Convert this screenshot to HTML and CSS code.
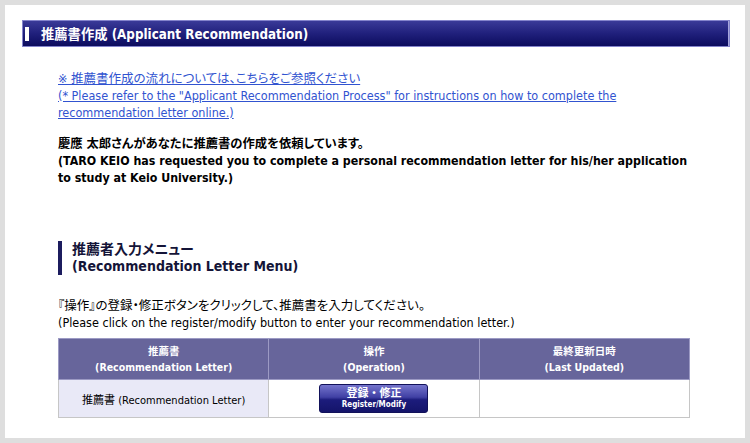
FILE: index.html
```html
<!DOCTYPE html>
<html>
  <head>
    <meta charset="utf-8" />
    <meta name="viewport" content="width=device-width, initial-scale=1.0" />
    <link rel="stylesheet" href="styles.css">
  </head>
  <body>
    <div class="page">
      <h1 class="page-title">
        <span class="title-mark"></span>
        <span>推薦書作成 (Applicant Recommendation)</span>
      </h1>

      <div class="content">
        <p class="links">
          <a href="#">※ 推薦書作成の流れについては、こちらをご参照ください</a><br>
          <a href="#">(* Please refer to the "Applicant Recommendation Process" for instructions on how to complete the<br>recommendation letter online.)</a>
        </p>

        <p class="request">
          慶應 太郎さんがあなたに推薦書の作成を依頼しています。<br>
          (TARO KEIO has requested you to complete a personal recommendation letter for his/her application<br>
          to study at Keio University.)
        </p>

        <h2 class="section-title">推薦者入力メニュー<br>(Recommendation Letter Menu)</h2>

        <p class="note">
          『操作』の登録・修正ボタンをクリックして、推薦書を入力してください。<br>
          (Please click on the register/modify button to enter your recommendation letter.)
        </p>

        <table class="menu">
          <thead>
            <tr>
              <th>推薦書<br>(Recommendation Letter)</th>
              <th>操作<br>(Operation)</th>
              <th>最終更新日時<br>(Last Updated)</th>
            </tr>
          </thead>
          <tbody>
            <tr>
              <td class="doc-name">推薦書 (Recommendation Letter)</td>
              <td>
                <a href="#" class="btn">
                  <span class="btn-jp">登録・修正</span>
                  <span class="btn-en">Register/Modify</span>
                </a>
              </td>
              <td></td>
            </tr>
          </tbody>
        </table>
      </div>
    </div>
  </body>
</html>
```

FILE: styles.css
```css
body {
  margin: 0;
  padding: 5px 5px 0;
  background: #dedede;
  font-family: "DejaVu Sans Condensed", "DejaVu Sans", "Noto Sans CJK JP", sans-serif;
  font-size: 12.5px;
  font-feature-settings: "palt";
  color: #000;
}

.page {
  width: 740px;
  height: 433px;
  box-sizing: border-box;
  padding: 15px 15px 0 17px;
  background: #fff;
}

.page-title {
  margin: 0;
  height: 27px;
  box-sizing: border-box;
  display: flex;
  align-items: center;
  padding-left: 2px;
  border: 1px solid #8484cc;
  box-shadow: inset -1px 0 0 #a6a6dc;
  background: linear-gradient(#3a3a98, #20207c 50%, #0c0c5e);
  color: #fff;
  font-size: 13.3px;
  font-weight: bold;
}

.title-mark {
  width: 4px;
  height: 14px;
  margin-right: 12px;
  background: #fff;
}

.content {
  padding: 0 40px 0 36px;
}

.content p {
  margin: 0;
  line-height: 17px;
  white-space: nowrap;
}

.links {
  padding-top: 23px;
}

.links a {
  color: #3153d0;
}

.content .request {
  margin-top: 15px;
  font-size: 12.3px;
  font-weight: bold;
}

.section-title {
  margin: 54px 0 0;
  padding-left: 10px;
  border-left: 4px solid #1c1c5e;
  font-size: 14px;
  line-height: 17px;
  color: #141438;
}

.content .note {
  margin-top: 22px;
}

.menu {
  margin-top: 7px;
  width: 632px;
  border-collapse: collapse;
  table-layout: fixed;
}

.menu th {
  padding: 4px 0;
  line-height: 16px;
  background: #67659b;
  border: 1px solid #9c9ac4;
  color: #fff;
  font-size: 10.5px;
  font-weight: bold;
}

.menu td {
  height: 29px;
  padding: 4px 0;
  border: 1px solid #c6c6c6;
  text-align: center;
  font-size: 11px;
}

.menu td.doc-name {
  background: #e9e9f7;
}

.btn {
  width: 109px;
  height: 29px;
  box-sizing: border-box;
  margin: 0 auto;
  display: flex;
  flex-direction: column;
  align-items: center;
  justify-content: center;
  border: 1px solid #12125a;
  border-radius: 3px;
  background: linear-gradient(#7474cc, #4040a4 45%, #1c1c7c 55%, #14146a);
  color: #fff;
  text-decoration: none;
  font-weight: bold;
  font-feature-settings: normal;
}

.btn-jp {
  font-size: 11px;
  line-height: 13px;
}

.btn-en {
  font-size: 8px;
  line-height: 10px;
}
```
